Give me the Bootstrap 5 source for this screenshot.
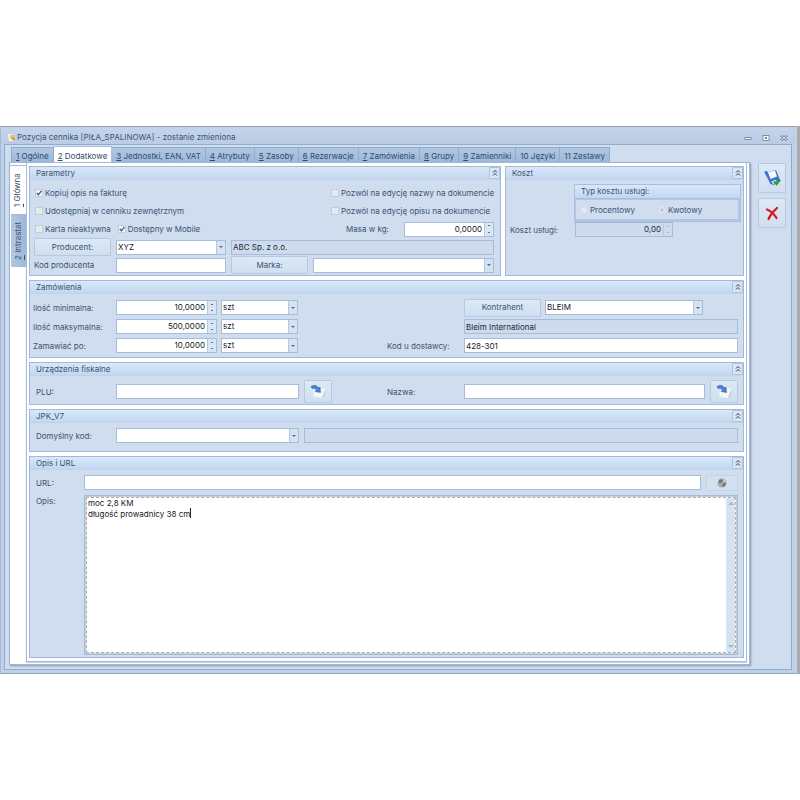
<!DOCTYPE html>
<html lang="pl">
<head>
<meta charset="utf-8">
<meta name="viewport" content="width=device-width, initial-scale=1">
<title>Pozycja cennika</title>
<link href="https://cdn.jsdelivr.net/npm/bootstrap@5.3.0/dist/css/bootstrap.min.css" rel="stylesheet">
<style>
:root{--line:#a6bcdb;--face:#cfddee;--ink:#3c5273}
body{font-family:Inter,"DejaVu Sans Condensed",sans-serif;font-size:8px;line-height:12px;color:var(--ink);background:#fff}
input,select,textarea,button{font:inherit;color:inherit;border-radius:0}
.desk{margin-top:126px;border-right:3px solid #ababab}
.win{background:#bfd1e9;border:1px solid #91a3bc;border-color:#9b9fa8 #c0d2ea #93a8c4 #a5b7d1;padding:0 4px 3px 3px}
.titlebar{height:17px;padding:4px 7px 0 6px;background:linear-gradient(#c3d4ea,#bbcde6);margin:0 -4px 0 -3px}
.titlebar .wbtn{border:0;background:none;padding:3px 0 0;width:10px;height:10px;line-height:0}
.client{background:var(--face);border:1px solid #8eabd0;padding:2px 5px 4px 4px}
.tabs{padding-left:2px}
.tabs a{height:15px;padding:2px 4px 0 4px;background:linear-gradient(#b2c8e2,#9db8d9);border:1px solid #8fabd0;border-width:1px 1px 0 0;color:#2f4a70;text-decoration:none;white-space:nowrap}
.tabs a:first-child{border-left-width:1px}
.tabs a.on{background:#fff;height:16px;margin-top:-1px;padding-top:3px;border-color:#a9c0e0}
u{text-underline-offset:1px}
.page{background:#fff;border:1px solid #a0b6d6;box-shadow:1px 1px 2px #8795ab;padding:0 2px 2px 0}
.side{width:16px;padding-top:2px}
.side a{writing-mode:vertical-rl;transform:rotate(180deg);width:16px;color:#3c5273;text-decoration:none;text-align:center;line-height:14px;height:49px;border-bottom:1px solid var(--line);background:#fff}
.side a+a{height:53px;width:15px;background:linear-gradient(90deg,#9db8d9,#b2c8e2);align-self:flex-end}
.sheet{border:1px solid var(--line);border-top:0;padding:3px 2px 3px 2px;box-shadow:0 1px 1px #ccd3de}
.grp{background:var(--face);border:1px solid #a3b8da;margin:0 0 4px}
.grp>header{height:13px;line-height:13px;padding-left:6px;background:linear-gradient(#d9e8f9,#c3d7f0);border-bottom:1px solid #c1d3eb;display:flex;justify-content:space-between}
.fold{width:11px;height:12px;padding:0;border:1px solid #adc3df;border-radius:1px;background:#d9e6f4;line-height:0}
.fold svg{display:block;margin:auto}
.r18{height:18px;display:flex;align-items:center;padding-left:2px}
.chk{display:flex;align-items:center;gap:3px;white-space:nowrap}
.nm{width:162px}
.chk input{appearance:none;width:6px;height:6px;margin:0;background:#e7ebf0;outline:1px solid #c1cddd;flex:none}
.chk input[type=checkbox]:checked{background:#edf2f8 url("data:image/svg+xml,%3Csvg xmlns='http://www.w3.org/2000/svg' viewBox='0 0 6 6'%3E%3Cpath d='M.8 2.8l1.6 2L5.4.8' fill='none' stroke='%23395070' stroke-width='1.2'/%3E%3C/svg%3E")}
.chk input[type=radio]{border-radius:50%;outline-color:#d7dfea}
.chk input[type=radio]:checked{background:radial-gradient(#b4bdc9 0 1px,#e7ebf0 2px)}
.fld{height:15px;border:1px solid var(--line);background:#fff;color:#141a24;padding:0 1px;display:flex;min-width:0;width:100%}
input.fld{line-height:13px;outline:0}
.fld.ro,.ro input{background:#cddbec;color:#202836}
.box{padding:0}
.box input,.box select{appearance:none;border:0;outline:0;padding:0 1px;min-width:0;flex:1;background:transparent;line-height:13px;height:13px;color:inherit}
.box input{text-align:right;padding-right:2px}
.arr{flex:0 0 9px;background:#d5e2f2;border-left:1px solid #b5c8e2;display:flex;align-items:center;justify-content:center;pointer-events:none}
.arr::after{content:"";border:2px solid transparent;border-top-color:#55698a;border-bottom:0}
.spin{flex:0 0 9px;display:flex;flex-direction:column;background:#dae6f4;border-left:1px solid #b5c8e2}
.spin button{flex:1;border:0;background:none;padding:0;min-height:0;display:flex;align-items:center;justify-content:center}
.spin button::after{content:"";width:2px;height:1px;background:#5d7294}
.ro .spin{background:#cddbec}
.ro .spin button::after{background:#a8b8cc}
.pbtn{height:18px;border:1px solid #b6c9e1;border-radius:1px;background:linear-gradient(#dce9f6,#d0dfef);padding:0;line-height:15px;text-align:center;width:100%}
.pbtn:disabled{background:#d2e0f0;border-color:#c3d3e8}
.ibtn{height:23px;line-height:0}
.ibtn svg{display:block;margin:auto}
.g-par{display:grid;grid-template-columns:77px 110px 77px 1fr;column-gap:5px;align-items:center;grid-auto-rows:18px}
.g-zam{display:grid;grid-template-columns:83px 101px 4px 77px 89px 77px 77px 1fr;align-items:center;grid-auto-rows:19px}
.c7{grid-column:7}
.c79{grid-column:7/9}
.g-fis{display:grid;grid-template-columns:80px 183px 5px 28px 55px 77px 1fr 5px 28px;align-items:center}
.g-jpk{display:grid;grid-template-columns:80px 183px 5px 1fr;align-items:center}
.g-url{display:grid;grid-template-columns:48px 1fr 32px;row-gap:4px}
.memo{grid-column:2/4;border:1px solid var(--line);background:#c9cdd3;position:relative;padding:1px}
.memo>div{border:1px dashed #adb0b5;background:#fff;display:flex}
.memo textarea{flex:1;height:154px;border:0;outline:0;resize:none;padding:0 1px;line-height:11px;color:#141a24;overflow:hidden}
.caret{position:absolute;left:105px;top:12px;width:1px;height:10px;background:#222}
.sbar{width:9px;background:#d5e2f0;display:flex;flex-direction:column;justify-content:space-between;align-items:center;padding:4px 0}
.sbar i{border:3px solid transparent;border-bottom-color:#a3b7d1;border-top:0}
.sbar i+i{border-top:3px solid #a3b7d1;border-bottom:0}
.cost{border:1px solid #a9bfde;width:167px}
.cost>div:first-child{height:14px;line-height:13px;padding-left:6px;background:linear-gradient(#d9e8f9,#c3d7f0);border-bottom:1px solid #a9bfde}
.cost>div+div{height:22px;border:1px solid #b4c7e0;border-width:1px 2px 2px 1px;padding-left:5px}
.tools{width:28px;gap:5px;padding-top:16px}
.tools .pbtn{height:30px;width:28px;line-height:0}
.tools svg{display:block;margin:auto}
</style>
<script src="https://cdn.jsdelivr.net/npm/bootstrap@5.3.0/dist/js/bootstrap.bundle.min.js"></script>
</head>
<body>
<svg class="d-none">
<symbol id="up" viewBox="0 0 6 8"><path d="M1 3.500L3 1.500 5 3.500M1 6.500L3 4.500 5 6.500" fill="none" stroke="#26374f" stroke-width="1"/></symbol>
<symbol id="send" viewBox="0 0 18 16"><path d="M5 6l12-2-4 10-9-1.500z" fill="#f4f6f9"/><path d="M13 14l4-10-1.500 8.500z" fill="#c3c8d1"/><path d="M2 2.500l3-1.200c2 .2 3.500 1.200 4.500 2.700L11 3l.5 5.500-5.500-1L7.500 6C6.500 4.500 5 4 3 4.500z" fill="#4a80d6" stroke="#2b5596" stroke-width=".5"/></symbol>
</svg>
<div class="desk">
<main class="win">
  <div class="titlebar d-flex justify-content-between">
    <div class="d-flex">
      <svg width="10" height="12" viewBox="0 0 10 12"><path d="M1 3l5 0 1 7-5 0z" fill="#f3f5f8"/><circle cx="5" cy="6" r="2.200" fill="#efc24b"/><circle cx="6.500" cy="8" r="1.400" fill="#c99325"/></svg>
      <span>Pozycja cennika [PIŁA_SPALINOWA] - zostanie zmieniona</span>
    </div>
    <div class="d-flex gap-2">
      <button class="wbtn" aria-label="Minimalizuj"><svg width="8" height="6" viewBox="0 0 8 6"><rect x="1" y="2.500" width="6" height="2" fill="#fff" stroke="#6e7c90" stroke-width=".8"/></svg></button>
      <button class="wbtn" aria-label="Maksymalizuj"><svg width="8" height="6" viewBox="0 0 8 6"><rect x="1" y=".5" width="6" height="5" fill="#fff" stroke="#6e7c90" stroke-width=".8"/><rect x="3" y="2" width="2" height="2" fill="#6e7c90"/></svg></button>
      <button class="wbtn" aria-label="Zamknij"><svg width="8" height="6" viewBox="0 0 8 6"><path d="M1 .5l6 5M7 .5l-6 5" stroke="#5b697e" stroke-width="2.200"/><path d="M1 .5l6 5M7 .5l-6 5" stroke="#fff" stroke-width=".9"/></svg></button>
    </div>
  </div>
  <div class="client d-flex">
    <div class="flex-grow-1">
      <nav class="tabs d-flex">
        <a href="#"><u>1</u> Ogólne</a><a href="#" class="on"><u>2</u> Dodatkowe</a><a href="#"><u>3</u> Jednostki, EAN, VAT</a><a href="#"><u>4</u> Atrybuty</a><a href="#"><u>5</u> Zasoby</a><a href="#"><u>6</u> Rezerwacje</a><a href="#"><u>7</u> Zamówienia</a><a href="#"><u>8</u> Grupy</a><a href="#"><u>9</u> Zamienniki</a><a href="#">10 Języki</a><a href="#">11 Zestawy</a>
      </nav>
      <div class="page d-flex">
        <nav class="side d-flex flex-column"><a href="#"><u>1</u> Główna</a><a href="#"><u>2</u> Intrastat</a></nav>
        <div class="sheet flex-grow-1">
          <div class="d-flex gap-1">
            <section class="grp flex-grow-1">
              <header><span>Parametry</span><button class="fold" aria-label="Zwiń"><svg width="6" height="8"><use href="#up"/></svg></button></header>
              <div style="padding:4px 6px 1px 4px">
                <div class="r18 justify-content-between"><label class="chk"><input type="checkbox" checked>Kopiuj opis na fakturę</label><label class="chk nm"><input type="checkbox" disabled>Pozwól na edycję nazwy na dokumencie</label></div>
                <div class="r18 justify-content-between"><label class="chk"><input type="checkbox">Udostępniaj w cenniku zewnętrznym</label><label class="chk nm"><input type="checkbox" disabled>Pozwól na edycję opisu na dokumencie</label></div>
                <div class="r18"><label class="chk"><input type="checkbox">Karta nieaktywna</label><label class="chk ms-2"><input type="checkbox" checked>Dostępny w Mobile</label><label class="ms-auto" style="width:58px" for="masa">Masa w kg:</label><div class="fld box" style="width:90px"><input id="masa" value="0,0000"><span class="spin"><button aria-label="Więcej"></button><button aria-label="Mniej"></button></span></div></div>
                <div class="g-par">
                  <button class="pbtn">Producent:</button>
                  <div class="fld box"><select aria-label="Producent"><option>XYZ</option></select><span class="arr"></span></div>
                  <input class="fld ro" style="grid-column:3/5" value="ABC Sp. z o.o." readonly aria-label="Nazwa producenta">
                  <label for="kod">Kod producenta</label>
                  <input id="kod" class="fld">
                  <button class="pbtn">Marka:</button>
                  <div class="fld box"><select aria-label="Marka"><option></option></select><span class="arr"></span></div>
                </div>
              </div>
            </section>
            <section class="grp" style="flex:0 0 239px">
              <header><span>Koszt</span><button class="fold" aria-label="Zwiń"><svg width="6" height="8"><use href="#up"/></svg></button></header>
              <div style="padding:4px 2px 0 4px">
                <div class="cost ms-auto"><div>Typ kosztu usługi:</div><div class="d-flex align-items-center"><label class="chk" style="width:78px"><input type="radio" name="typ" disabled>Procentowy</label><label class="chk"><input type="radio" name="typ" checked disabled>Kwotowy</label></div></div>
                <div class="d-flex align-items-center"><label for="koszt" style="width:65px">Koszt usługi:</label><div class="fld box ro" style="width:98px"><input id="koszt" value="0,00" readonly><span class="spin"><button aria-label="Więcej"></button><button aria-label="Mniej"></button></span></div></div>
              </div>
            </section>
          </div>
          <section class="grp">
            <header><span>Zamówienia</span><button class="fold" aria-label="Zwiń"><svg width="6" height="8"><use href="#up"/></svg></button></header>
            <div class="g-zam" style="padding:4px 5px 2px 3px">
              <label for="min">Ilość minimalna:</label><div class="fld box"><input id="min" value="10,0000"><span class="spin"><button aria-label="Więcej"></button><button aria-label="Mniej"></button></span></div><span></span>
              <div class="fld box"><select aria-label="Jednostka"><option>szt</option></select><span class="arr"></span></div>
              <button class="pbtn c7">Kontrahent</button><div class="fld box ms-1" style="width:158px"><select aria-label="Kontrahent"><option>BLEIM</option></select><span class="arr"></span></div>
              <label for="max">Ilość maksymalna:</label><div class="fld box"><input id="max" value="500,0000"><span class="spin"><button aria-label="Więcej"></button><button aria-label="Mniej"></button></span></div><span></span>
              <div class="fld box"><select aria-label="Jednostka"><option>szt</option></select><span class="arr"></span></div>
              <input class="fld ro c79" value="Bleim International" readonly aria-label="Nazwa kontrahenta">
              <label for="zam">Zamawiać po:</label><div class="fld box"><input id="zam" value="10,0000"><span class="spin"><button aria-label="Więcej"></button><button aria-label="Mniej"></button></span></div><span></span>
              <div class="fld box"><select aria-label="Jednostka"><option>szt</option></select><span class="arr"></span></div><span></span>
              <label for="dost">Kod u dostawcy:</label>
              <input id="dost" class="fld c79" value="428-301">
            </div>
          </section>
          <section class="grp">
            <header><span>Urządzenia fiskalne</span><button class="fold" aria-label="Zwiń"><svg width="6" height="8"><use href="#up"/></svg></button></header>
            <div class="g-fis" style="padding:4px 5px 1px 6px">
              <label for="plu">PLU:</label><input id="plu" class="fld"><span></span><button class="pbtn ibtn" aria-label="Wyślij PLU"><svg width="18" height="16"><use href="#send"/></svg></button><span></span>
              <label for="naz">Nazwa:</label><input id="naz" class="fld"><span></span><button class="pbtn ibtn" aria-label="Wyślij nazwę"><svg width="18" height="16"><use href="#send"/></svg></button>
            </div>
          </section>
          <section class="grp">
            <header><span>JPK_V7</span><button class="fold" aria-label="Zwiń"><svg width="6" height="8"><use href="#up"/></svg></button></header>
            <div class="g-jpk" style="padding:5px 5px 8px 6px">
              <label for="dom">Domyślny kod:</label><div class="fld box"><select id="dom"><option></option></select><span class="arr"></span></div><span></span><input class="fld ro" readonly aria-label="Opis kodu">
            </div>
          </section>
          <section class="grp mb-0">
            <header><span>Opis i URL</span><button class="fold" aria-label="Zwiń"><svg width="6" height="8"><use href="#up"/></svg></button></header>
            <div class="g-url" style="padding:5px 5px 2px 6px">
              <label for="url" style="line-height:16px">URL:</label><div style="padding-right:5px"><input id="url" class="fld"></div>
              <button class="pbtn" style="height:16px" aria-label="Otwórz adres" disabled><svg class="d-block mx-auto" width="10" height="10" viewBox="0 0 10 10"><circle cx="5" cy="5" r="4.500" fill="#a7a9ad"/><path d="M2 2l3-1 1 2-2 2-2 0zM6 5l3 0-1 3-3 1z" fill="#737679"/><path d="M6 1.200l2.500 2-2 .8z" fill="#d8dadd"/></svg></button>
              <label for="opis">Opis:</label>
              <div class="memo"><div><textarea id="opis">moc 2,8 KM
długość prowadnicy 38 cm</textarea><span class="sbar"><i></i><i></i></span></div><span class="caret"></span></div>
            </div>
          </section>
        </div>
      </div>
    </div>
    <aside class="tools d-flex flex-column ms-2">
      <button class="pbtn" aria-label="Zapisz"><svg width="20" height="20" viewBox="0 0 20 20"><path d="M2 3.500L5 3l1 1.500L13 2l1.500 1L18 12l-6.500 5-3-1z" fill="#3f6fdb"/><path d="M6 4.500L13 2.500l2 6L8.500 11z" fill="#fbfcff"/><path d="M9.500 13.500l4-1.800 1.500 2.500-4 2z" fill="#e5ecf6"/><path d="M12 13.500l2.500 2.500L18 11.500" fill="none" stroke="#22a035" stroke-width="2.400"/></svg></button>
      <button class="pbtn" aria-label="Anuluj"><svg width="16" height="16" viewBox="0 0 16 16"><path d="M3 4.500c4 1.500 7 4.500 9.500 8.500M13 3C9.500 6 6.500 9.500 4.500 14" fill="none" stroke="#dc1420" stroke-width="2.200" stroke-linecap="round"/></svg></button>
    </aside>
  </div>
</main>
</div>
</body>
</html>
